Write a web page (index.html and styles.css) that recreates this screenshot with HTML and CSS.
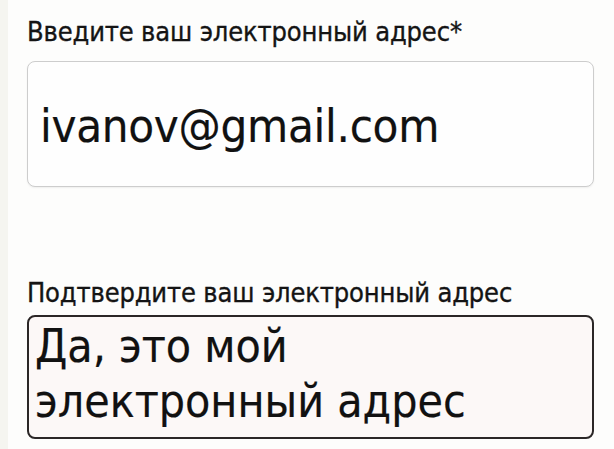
FILE: index.html
```html
<!DOCTYPE html>
<html lang="ru">
<head>
<meta charset="utf-8">
<title>Электронный адрес</title>
<link rel="stylesheet" href="styles.css">
</head>
<body>
<main class="page">
  <form class="form">
    <div class="field">
      <label class="label" for="email">Введите ваш электронный адрес*</label>
      <div class="input input-plain" id="email">ivanov@gmail.com</div>
    </div>
    <div class="field field-confirm">
      <label class="label" for="email-confirm">Подтвердите ваш электронный адрес</label>
      <div class="input input-strong" id="email-confirm">Да, это мой<br>электронный адрес</div>
    </div>
  </form>
</main>
</body>
</html>
```

FILE: styles.css
```css
html, body {
  margin: 0;
  height: 100%;
}

body {
  background: #fdfdfc;
  color: #1a1a1a;
  font-family: "DejaVu Sans Condensed", "DejaVu Sans", sans-serif;
}

.page {
  min-height: 100%;
  box-sizing: border-box;
  border-left: 8px solid #f5f5f0;
  padding: 17px 20px 0 19px;
}

.form {
  display: flex;
  flex-direction: column;
  gap: 91px;
}

.field {
  display: flex;
  flex-direction: column;
  gap: 14px;
}

.field-confirm {
  gap: 7px;
}

.label {
  font-size: 27px;
  line-height: 30px;
  color: #141414;
  letter-spacing: -0.15px;
  -webkit-text-stroke: 0.35px #141414;
}

.input {
  box-sizing: border-box;
  border-radius: 8px;
  color: #111;
  -webkit-text-stroke: 0.2px #111;
}

.input-plain {
  display: flex;
  align-items: center;
  height: 126px;
  padding: 2px 12px 0;
  background: #fefefe;
  border: 1.5px solid #cdcdcd;
  box-shadow: 0 1px 2px rgba(0, 0, 0, 0.06);
  font-size: 47px;
  letter-spacing: -0.3px;
}

.input-strong {
  height: 124px;
  padding: 2px 6px 0;
  background: #fcf8f7;
  border: 2px solid #2b2727;
  font-size: 46px;
  line-height: 55px;
}
```
